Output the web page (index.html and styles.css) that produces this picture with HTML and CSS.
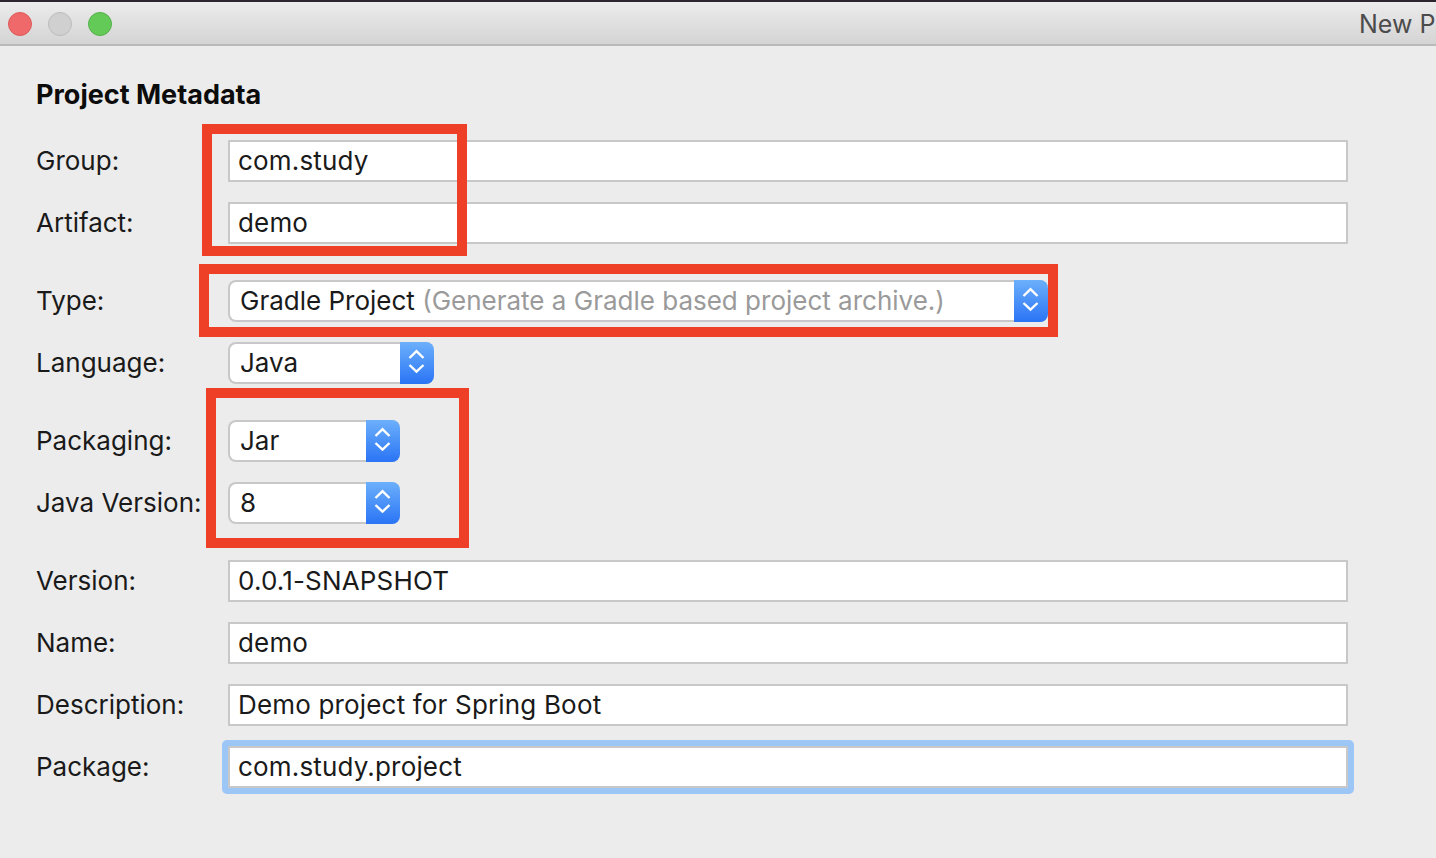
FILE: index.html
```html
<!DOCTYPE html>
<html lang="en">
<head>
<meta charset="utf-8">
<title>New Project</title>
<link rel="stylesheet" href="styles.css">
</head>
<body>
<div class="window">
  <header class="titlebar">
    <div class="lights">
      <span class="light red"></span>
      <span class="light grey"></span>
      <span class="light green"></span>
    </div>
    <div class="title">New P</div>
  </header>
  <main class="content">
    <h1 class="heading">Project Metadata</h1>
    <div class="form">
      <label class="label">Group:</label>
      <div class="field">com.study</div>
      <label class="label">Artifact:</label>
      <div class="field">demo</div>

      <label class="label group-start">Type:</label>
      <div class="select select-type group-start">
        <span class="select-text">Gradle Project <span class="hint">(Generate a Gradle based project archive.)</span></span>
        <span class="stepper"><svg viewBox="0 0 34 42" class="chev"><path d="M9.5 16 16.5 9.2 23.5 16M9.5 23 16.5 29.6 23.5 23"/></svg></span>
      </div>
      <label class="label">Language:</label>
      <div class="select select-lang">
        <span class="select-text">Java</span>
        <span class="stepper"><svg viewBox="0 0 34 42" class="chev"><path d="M9.5 16 16.5 9.2 23.5 16M9.5 23 16.5 29.6 23.5 23"/></svg></span>
      </div>

      <label class="label group-start">Packaging:</label>
      <div class="select select-small group-start">
        <span class="select-text">Jar</span>
        <span class="stepper"><svg viewBox="0 0 34 42" class="chev"><path d="M9.5 16 16.5 9.2 23.5 16M9.5 23 16.5 29.6 23.5 23"/></svg></span>
      </div>
      <label class="label">Java Version:</label>
      <div class="select select-small">
        <span class="select-text">8</span>
        <span class="stepper"><svg viewBox="0 0 34 42" class="chev"><path d="M9.5 16 16.5 9.2 23.5 16M9.5 23 16.5 29.6 23.5 23"/></svg></span>
      </div>

      <label class="label group-start">Version:</label>
      <div class="field group-start">0.0.1-SNAPSHOT</div>
      <label class="label">Name:</label>
      <div class="field">demo</div>
      <label class="label">Description:</label>
      <div class="field">Demo project for Spring Boot</div>
      <label class="label">Package:</label>
      <div class="field focused">com.study.project</div>
    </div>
  </main>
  <div class="mark mark-1"></div>
  <div class="mark mark-2"></div>
  <div class="mark mark-3"></div>
</div>
</body>
</html>
```
FILE: styles.css
```css
* { box-sizing: border-box; }
html, body { margin: 0; height: 100%; }
body {
  background: #ececec;
  font-family: Inter, "Liberation Sans", sans-serif;
  color: #1a1a1a;
  overflow: hidden;
}
.window { position: relative; width: 1436px; height: 858px; overflow: hidden; }
.titlebar {
  height: 46px;
  display: flex;
  align-items: center;
  border-top: 2px solid #2b2530;
  border-bottom: 2px solid #b9b9b9;
  background: linear-gradient(#ececec, #d4d4d4);
  padding: 2px 0 0 8px;
  overflow: hidden;
}
.lights { display: flex; gap: 16px; flex: none; }
.light { width: 24px; height: 24px; border-radius: 50%; display: block; border: 1px solid; }
.red { background: #f0696a; border-color: #dc5a5a; }
.grey { background: #d0d0d0; border-color: #bcbcbc; }
.green { background: #63c957; border-color: #55b14b; }
.title {
  margin-left: 1247px;
  flex: none;
  font-size: 25px;
  line-height: 30px;
  color: #4c4c4c;
  white-space: nowrap;
}
.content { padding: 32px 88px 0 36px; }
.heading {
  margin: 0 0 28px;
  font-size: 27px;
  line-height: 34px;
  font-weight: 700;
  color: #0c0c0c;
}
.form {
  display: grid;
  grid-template-columns: 192px 1fr;
  row-gap: 20px;
  align-items: center;
}
.group-start { margin-top: 16px; }
.label { font-size: 26px; line-height: 42px; }
.field {
  height: 42px;
  background: #fff;
  border: 2px solid #c8c8c8;
  padding-left: 8px;
  font-size: 26px;
  line-height: 38px;
  letter-spacing: 0.17px;
  white-space: nowrap;
}
.focused {
  box-shadow: 0 0 0 6px #9cc6f5;
  border-radius: 1.5px;
}
.select {
  height: 42px;
  display: flex;
  justify-content: space-between;
  background: #fff;
  border: 2px solid #c8c8c8;
  border-right: 0;
  border-radius: 8px;
  font-size: 26px;
  line-height: 38px;
  padding-left: 10px;
  white-space: nowrap;
}
.select-type { width: 820px; }
.select-lang { width: 206px; }
.select-small { width: 172px; }
.hint { color: #9a9a9a; }
.stepper {
  flex: none;
  width: 34px;
  height: 42px;
  margin-top: -2px;
  border-radius: 0 8px 8px 0;
  background: linear-gradient(#6cb0fb, #2a74f6);
  display: block;
}
.chev { display: block; width: 34px; height: 42px; fill: none; stroke: #fff; stroke-width: 2.4; }
.mark { position: absolute; border: 10px solid #ee4026; pointer-events: none; }
.mark-1 { left: 202px; top: 124px; width: 265px; height: 132px; }
.mark-2 { left: 199px; top: 264px; width: 859px; height: 73px; }
.mark-3 { left: 206px; top: 388px; width: 263px; height: 160px; }
```
